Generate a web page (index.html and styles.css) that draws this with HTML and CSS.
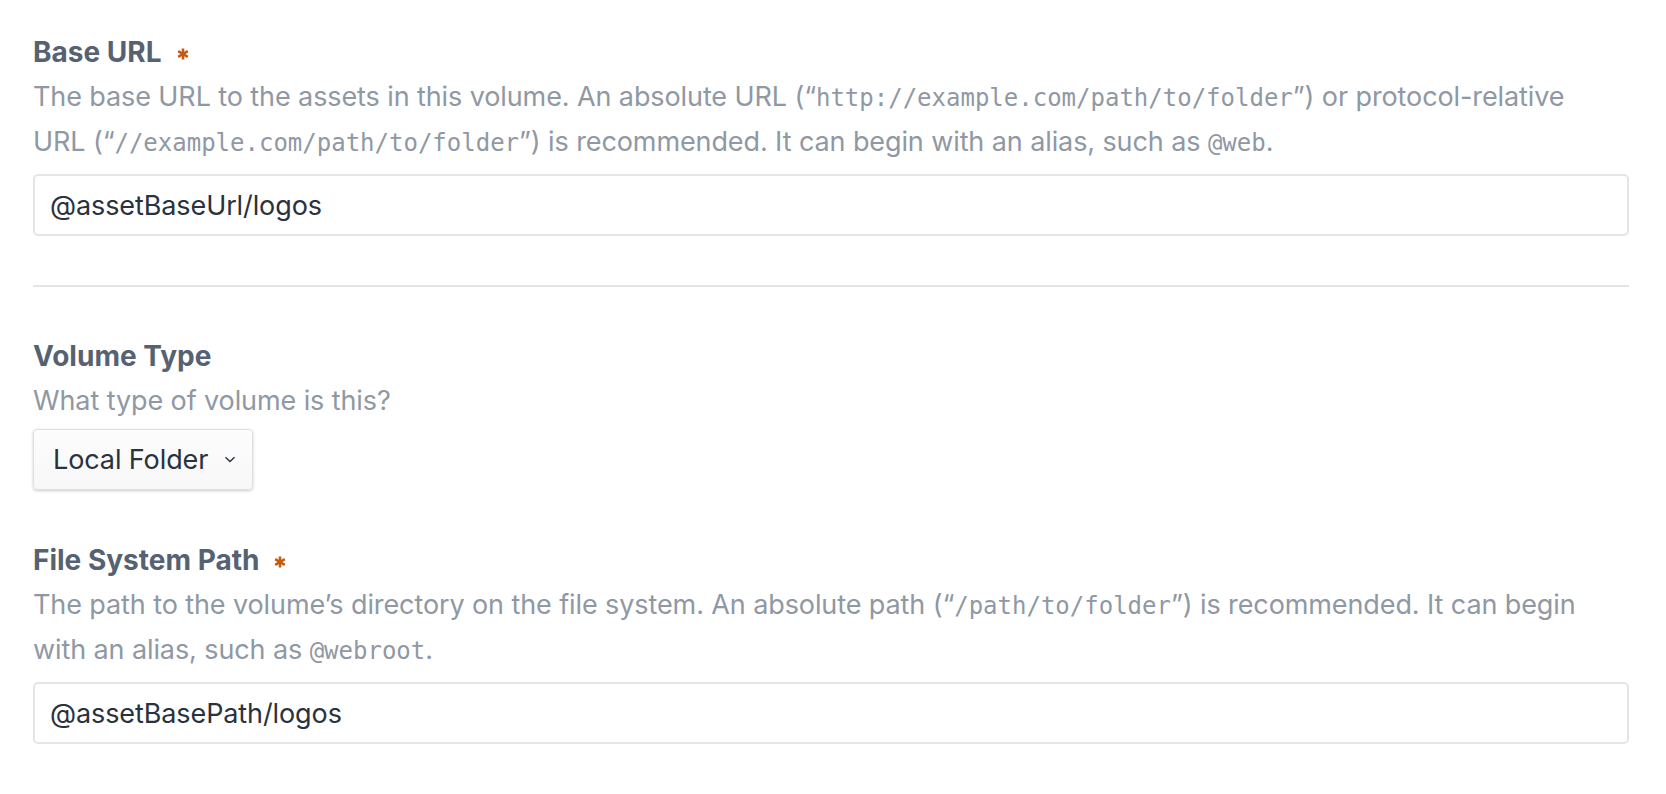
FILE: index.html
```html
<!DOCTYPE html>
<html lang="en">
<head>
<meta charset="utf-8">
<title>Volume settings</title>
<link rel="stylesheet" href="styles.css">
</head>
<body>
<main class="form">
  <div class="field">
    <div class="heading">
      <label class="label" for="baseUrl">Base URL</label>
      <svg class="required" viewBox="0 0 12 12" aria-label="required"><g stroke="currentColor" stroke-width="2.6" stroke-linecap="butt"><line x1="6" y1="0.5" x2="6" y2="11.5"/><line x1="1.2" y1="3.2" x2="10.8" y2="8.8"/><line x1="1.2" y1="8.8" x2="10.8" y2="3.2"/></g></svg>
    </div>
    <p class="instructions">The base URL to the assets in this volume. An absolute URL (“<code>http://example.com/path/to/folder</code>”) or protocol-relative<br>URL (“<code>//example.com/path/to/folder</code>”) is recommended. It can begin with an alias, such as <code>@web</code>.</p>
    <div class="text-input" id="baseUrl">@assetBaseUrl/logos</div>
  </div>

  <hr class="divider">

  <div class="field">
    <div class="heading">
      <label class="label">Volume Type</label>
    </div>
    <p class="instructions">What type of volume is this?</p>
    <div class="select">
      <span>Local Folder</span>
      <svg class="chevron" viewBox="0 0 12 7"><path d="M1.5 1.2 L6 5.6 L10.5 1.2" fill="none" stroke="currentColor" stroke-width="1.4"/></svg>
    </div>
  </div>

  <div class="field">
    <div class="heading">
      <label class="label" for="path">File System Path</label>
      <svg class="required" viewBox="0 0 12 12" aria-label="required"><g stroke="currentColor" stroke-width="2.6" stroke-linecap="butt"><line x1="6" y1="0.5" x2="6" y2="11.5"/><line x1="1.2" y1="3.2" x2="10.8" y2="8.8"/><line x1="1.2" y1="8.8" x2="10.8" y2="3.2"/></g></svg>
    </div>
    <p class="instructions">The path to the volume’s directory on the file system. An absolute path (“<code>/path/to/folder</code>”) is recommended. It can begin<br>with an alias, such as <code>@webroot</code>.</p>
    <div class="text-input" id="path">@assetBasePath/logos</div>
  </div>
</main>
</body>
</html>
```

FILE: styles.css
```css
html, body {
  margin: 0;
  padding: 0;
  background: #ffffff;
}

body {
  font-family: Inter, "Noto Sans", "Liberation Sans", sans-serif;
  font-size: 27px;
  letter-spacing: -0.1px;
  color: #29323d;
}

.form {
  padding: 32px 37px 0 33px;
}

.field + .field {
  margin-top: 50px;
}

.heading {
  display: flex;
  align-items: center;
  height: 40px;
}

.label {
  font-size: 28px;
  letter-spacing: 0;
  font-weight: 700;
  color: #566271;
  line-height: 40px;
}

.required {
  width: 12px;
  height: 12px;
  margin-left: 15px;
  margin-top: 3px;
  color: #c65a10;
}

.instructions {
  margin: 3px 0 0;
  color: #8f98a3;
  line-height: 44px;
  white-space: nowrap;
}

.instructions code {
  font-family: "DejaVu Sans Mono", "Liberation Mono", monospace;
  font-size: 24px;
  letter-spacing: 0;
  color: #8f98a3;
}

.text-input {
  margin-top: 9px;
  height: 62px;
  box-sizing: border-box;
  border: 2px solid #e4e5e7;
  border-radius: 5px;
  padding: 0 15px;
  display: flex;
  align-items: center;
  color: #29323d;
  background: #fff;
}

.divider {
  border: 0;
  height: 2px;
  background: #e4e5e8;
  margin: 49px 0 49px;
}

.select {
  margin-top: 6px;
  width: 220px;
  height: 61px;
  box-sizing: border-box;
  border: 1px solid #e0e0e0;
  border-radius: 4px;
  background: linear-gradient(#fdfdfd, #f7f7f7);
  box-shadow: 0 1px 3px rgba(0, 0, 0, 0.2);
  display: flex;
  align-items: center;
  justify-content: space-between;
  padding: 0 16px 0 19px;
  color: #29323d;
}

.chevron {
  width: 12px;
  height: 7px;
  color: #29323d;
}
```
